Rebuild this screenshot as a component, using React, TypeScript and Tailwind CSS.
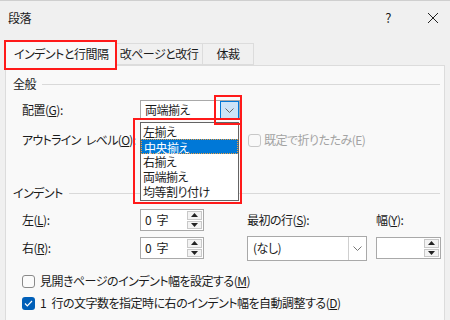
import React from 'react';

const font = "font-['Noto_Sans_CJK_JP',sans-serif] [font-feature-settings:'palt'] tracking-[-0.5px]";

// a wider word gap, as the dialog font draws it
const Gap = () => <span className="tracking-[2.5px]"> </span>;

const Spin: React.FC<{ value?: boolean; width: string }> = ({ value, width }) => (
  <div className={`${width} h-[22px] border border-[#a9a9a9] bg-white flex items-center justify-between`}>
    <span className="pl-[4px] leading-none">{value && <>0<Gap />字</>}</span>
    <div className="flex flex-col h-full py-px pr-px gap-px w-[16px]">
      <div className="flex-1 border border-[#c8c8c8] bg-[#f3f3f3] flex items-center justify-center">
        <svg width="7" height="4" viewBox="0 0 7 4"><path d="M0 4 L3.5 0 L7 4 Z" fill="#222" /></svg>
      </div>
      <div className="flex-1 border border-[#c8c8c8] bg-[#f3f3f3] flex items-center justify-center">
        <svg width="7" height="4" viewBox="0 0 7 4"><path d="M0 0 L3.5 4 L7 0 Z" fill="#222" /></svg>
      </div>
    </div>
  </div>
);

const Chevron: React.FC<{ color?: string }> = ({ color = '#666' }) => (
  <svg width="9" height="5" viewBox="0 0 9 5"><path d="M0.5 0.5 L4.5 4.5 L8.5 0.5" fill="none" stroke={color} strokeWidth="1" /></svg>
);

const Check: React.FC<{ checked?: boolean; disabled?: boolean }> = ({ checked, disabled }) => (
  <div
    className={`w-[13px] h-[13px] shrink-0 rounded-[3px] flex items-center justify-center ${
      checked ? 'bg-[#005fb8]' : disabled ? 'border border-[#c8c8c8] bg-[#f9f9f9]' : 'border border-[#8a8a8a] bg-[#fbfbfb]'
    }`}
  >
    {checked && (
      <svg width="9" height="7" viewBox="0 0 9 7"><path d="M1 3.5 L3.3 5.8 L8 1" fill="none" stroke="#fff" strokeWidth="1.2" /></svg>
    )}
  </div>
);

const Section: React.FC<{ title: string; className?: string }> = ({ title, className }) => (
  <div className={`flex items-center h-[16px] pl-[7px] pr-[4px] gap-[6px] ${className ?? ''}`}>
    <span>{title}</span>
    <div className="flex-1 h-px bg-[#d9d9d9]" />
  </div>
);

export default function App() {
  const options = ['左揃え', '中央揃え', '右揃え', '両端揃え', '均等割り付け'];

  return (
    <div className={`relative w-[450px] h-[320px] overflow-hidden bg-[#f0f0f0] text-[12px] text-[#1b1b1b] ${font}`}>
      {/* Title bar */}
      <div className="h-[35px] flex items-center pl-[8px] border-t border-[#cfcfcf]">
        <span>段落</span>
        <span className="ml-auto mr-[36px] text-[13px]">?</span>
        <svg className="mr-[11px]" width="12" height="12" viewBox="0 0 12 12">
          <path d="M1 1 L11 11 M11 1 L1 11" stroke="#222" strokeWidth="1" />
        </svg>
      </div>

      {/* Tabs */}
      <div className="h-[30px] flex items-end pl-[5px]">
        <div className="relative z-10 -mb-px h-[26px] w-[111px] bg-[#f9f9f9] border border-b-0 border-[#dcdcdc] flex items-center pl-[8px]">
          インデントと行間隔
        </div>
        <div className="h-[22px] w-[87px] bg-[#f0f0f0] border border-l-0 border-[#dcdcdc] flex items-center justify-center">
          改ページと改行
        </div>
        <div className="h-[22px] w-[51px] bg-[#f0f0f0] border border-l-0 border-[#dcdcdc] flex items-center justify-center">
          体裁
        </div>
      </div>

      {/* Panel */}
      <div className="mx-[5px] h-[300px] bg-[#f9f9f9] border border-[#dcdcdc]">
        <Section title="全般" className="mt-[10px]" />

        <div className="flex items-center h-[20px] mt-[8px] pl-[16px]">
          <span className="w-[118px]">配置(<u>G</u>):</span>
          <div className="w-[100px] h-[20px] border border-[#a9a9a9] bg-white flex items-center">
            <span className="pl-[4px] flex-1">両端揃え</span>
            <div className="w-[19px] h-full bg-[#cce4f7] border border-[#0078d7] flex items-center justify-center">
              <Chevron />
            </div>
          </div>
        </div>

        <div className="flex items-center h-[20px] mt-[10px] pl-[16px]">
          <span className="w-[226px] tracking-[-0.7px]">アウトライン<Gap />レベル(<u>O</u>):</span>
          <Check disabled />
          <span className="ml-[3px] text-[#a3a3a3]">既定で折りたたみ(E)</span>
        </div>

        <Section title="インデント" className="mt-[35px]" />

        <div className="flex items-center h-[22px] mt-[8px] pl-[16px]">
          <span className="w-[118px]">左(<u>L</u>):</span>
          <Spin value width="w-[64px]" />
          <span className="ml-[43px] w-[129px]">最初の行(<u>S</u>):</span>
          <span>幅(<u>Y</u>):</span>
        </div>

        <div className="flex items-center h-[22px] mt-[6px] pl-[16px]">
          <span className="w-[118px]">右(<u>R</u>):</span>
          <Spin value width="w-[64px]" />
          <div className="ml-[43px] w-[120px] h-[25px] border border-[#a9a9a9] bg-white flex items-center">
            <span className="pl-[5px] flex-1">(なし)</span>
            <div className="w-[18px] h-full border-l border-[#cfcfcf] flex items-center justify-center">
              <Chevron color="#777" />
            </div>
          </div>
          <div className="ml-[9px]">
            <Spin width="w-[65px]" />
          </div>
        </div>

        <div className="flex items-center h-[16px] mt-[14px] pl-[16px] gap-[5px]">
          <Check />
          <span>見開きページのインデント幅を設定する(<u>M</u>)</span>
        </div>

        <div className="flex items-center h-[16px] mt-[6px] pl-[16px] gap-[5px]">
          <Check checked />
          <span>1<Gap />行の文字数を指定時に右のインデント幅を自動調整する(<u>D</u>)</span>
        </div>

        <Section title="間隔" className="mt-[8px]" />
      </div>

      {/* Open dropdown list */}
      <div className="absolute left-[140px] top-[122px] w-[99px] border border-[#646464] bg-white py-px z-20">
        {options.map((o) => (
          <div
            key={o}
            className={`h-[15px] leading-[15px] pl-[2px] ${
              o === '中央揃え' ? 'bg-[#0078d7] text-white border border-dotted border-[#f0a040] leading-[13px]' : ''
            }`}
          >
            {o}
          </div>
        ))}
      </div>

      {/* Red annotation boxes */}
      <div className="absolute left-[4px] top-[40px] w-[113px] h-[30px] border-2 border-[#ff1a1a] z-30" />
      <div className="absolute left-[214px] top-[95px] w-[28px] h-[30px] border-2 border-[#ff1a1a] z-30" />
      <div className="absolute left-[133px] top-[118px] w-[109px] h-[86px] border-2 border-[#ff1a1a] z-30" />
    </div>
  );
}
